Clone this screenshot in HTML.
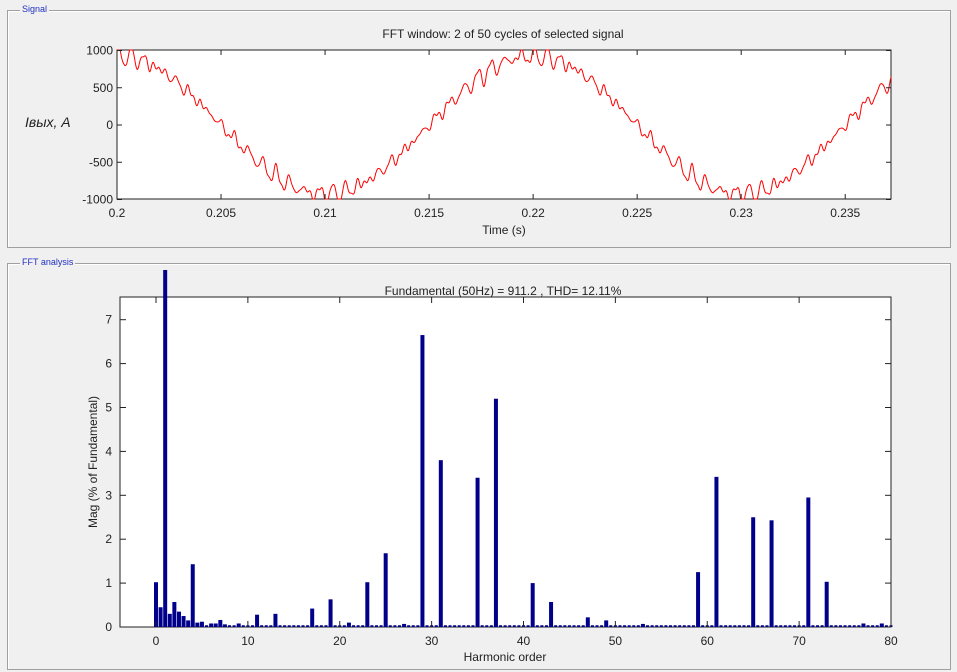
<!DOCTYPE html>
<html><head><style>
body{margin:0;width:957px;height:672px;background:#f0f0f0;font-family:"Liberation Sans",sans-serif;overflow:hidden;position:relative}
.fr{position:absolute;border:1px solid #a0a0a0;box-shadow:1px 1px 0 #fff inset}
.lb{position:absolute;font-size:9px;color:#2030c0;background:#f0f0f0;padding:0 2px}
svg{position:absolute;left:0;top:0}
text{font-family:"Liberation Sans",sans-serif;font-size:12px;fill:#222}
</style></head><body>
<div class="fr" style="left:7px;top:10px;width:942px;height:236px"></div>
<div class="lb" style="left:20px;top:4px">Signal</div>
<div class="fr" style="left:7px;top:263px;width:942px;height:405px"></div>
<div class="lb" style="left:20px;top:257px">FFT analysis</div>
<svg width="957" height="672" id="s"></svg>
<script>
const s=document.getElementById('s');let h='';
// top axes
const L=117,R=891,T=50,B=199,t0=0.2,t1=0.2372;
const X=t=>L+(t-t0)/(t1-t0)*(R-L),Y=v=>125-v*(74.5/1000);
h+=`<rect x="${L}" y="${T}" width="${R-L}" height="${B-T}" fill="#fff" stroke="#222"/>`;
let p='';for(let i=0;i<=1400;i++){let t=t0+(t1-t0)*i/1400;let w=2*Math.PI*50*(t-0.2);
let v=930*Math.cos(w)+60*Math.sin(29*w+1)+38*Math.sin(37*w)+35*Math.sin(31*w+2)+30*Math.sin(35*w+0.5)+25*Math.sin(61*w)+20*Math.sin(71*w+1);
p+=(i?'L':'M')+X(t).toFixed(1)+','+Math.max(T,Math.min(B,Y(v))).toFixed(1);}
h+=`<path d="${p}" fill="none" stroke="#f00" stroke-width="1"/>`;
[0.2,0.205,0.21,0.215,0.22,0.225,0.23,0.235].forEach(t=>{let x=X(t);h+=`<line x1="${x}" y1="${B}" x2="${x}" y2="${B-5}" stroke="#222"/><line x1="${x}" y1="${T}" x2="${x}" y2="${T+5}" stroke="#222"/><text x="${x}" y="217" text-anchor="middle">${t}</text>`});
[1000,500,0,-500,-1000].forEach(v=>{let y=Y(v);h+=`<line x1="${L}" y1="${y}" x2="${L+5}" y2="${y}" stroke="#222"/><line x1="${R}" y1="${y}" x2="${R-5}" y2="${y}" stroke="#222"/><text x="${L-4}" y="${y+4}" text-anchor="end">${v}</text>`});
h+=`<text x="503" y="38" text-anchor="middle">FFT window: 2 of 50 cycles of selected signal</text>`;
h+=`<text x="504" y="234" text-anchor="middle">Time (s)</text>`;
h+=`<text x="25" y="127" style="font-size:14px;font-style:italic">Iвых, A</text>`;
// bottom axes
const L2=120,R2=891,T2=297,B2=627;const X2=n=>156+n*9.1875,Y2=v=>B2-v*43.9;
h+=`<rect x="${L2}" y="${T2}" width="${R2-L2}" height="${B2-T2}" fill="#fff" stroke="#222"/>`;
const bars={0:1.02,0.5:0.45,1:8.25,1.5:0.3,2:0.57,2.5:0.35,3:0.25,3.5:0.15,4:1.43,4.5:0.1,5:0.12,6:0.08,6.5:0.08,7:0.16,7.5:0.06,9:0.08,11:0.28,13:0.3,17:0.42,19:0.63,21:0.1,23:1.02,25:1.68,27:0.07,29:6.65,31:3.8,35:3.4,37:5.2,41:1.0,43:0.57,47:0.22,49:0.15,53:0.07,59:1.25,61:3.42,65:2.5,67:2.43,71:2.95,73:1.03,77:0.08,79:0.08};
for(let n=0;n<=80;n+=0.5){if(!(n in bars))h+=`<rect x="${X2(n)-1.5}" y="${Y2(0.04)}" width="3" height="${0.04*43.9}" fill="#00008b"/>`;}
for(let n in bars){let v=bars[n],y=Math.max(270,Y2(v));h+=`<rect x="${X2(+n)-2}" y="${y}" width="4" height="${B2-y}" fill="#00008b"/>`;}
for(let n=0;n<=80;n+=10){let x=X2(n);h+=`<line x1="${x}" y1="${B2}" x2="${x}" y2="${B2-6}" stroke="#222"/><line x1="${x}" y1="${T2}" x2="${x}" y2="${T2+6}" stroke="#222"/><text x="${x}" y="645" text-anchor="middle">${n}</text>`}
for(let v=0;v<=7;v++){let y=Y2(v);h+=`<line x1="${L2}" y1="${y}" x2="${L2+6}" y2="${y}" stroke="#222"/><line x1="${R2}" y1="${y}" x2="${R2-6}" y2="${y}" stroke="#222"/><text x="${L2-8}" y="${y+4}" text-anchor="end">${v}</text>`}
h+=`<text x="503" y="295" text-anchor="middle">Fundamental (50Hz) = 911.2 , THD= 12.11%</text>`;
h+=`<text x="505" y="661" text-anchor="middle">Harmonic order</text>`;
h+=`<text transform="translate(97,462) rotate(-90)" text-anchor="middle">Mag (% of Fundamental)</text>`;
s.innerHTML=h;
</script>
</body></html>
